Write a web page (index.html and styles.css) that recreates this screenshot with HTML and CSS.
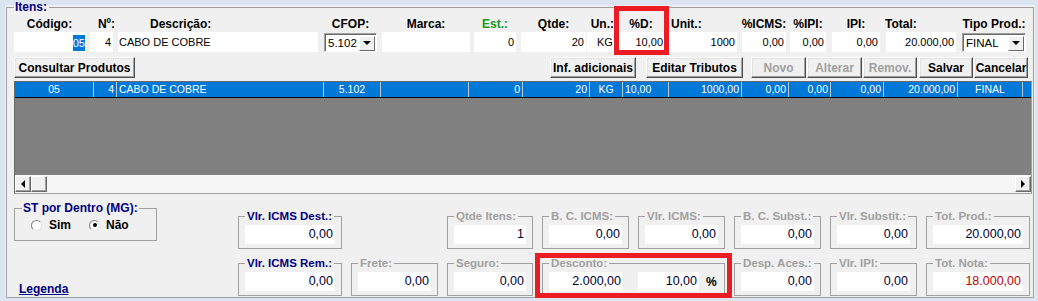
FILE: index.html
```html
<!DOCTYPE html>
<html lang="pt-BR">
<head>
    <meta charset="UTF-8">
    <title>Itens</title>
    <link rel="stylesheet" href="styles.css">
</head>
<body>
<div class="frame">
    <fieldset class="itens">
        <legend>Itens:</legend>

        <div class="fields">
            <div class="fld f-cod"><label>Código:</label><div class="box r sel-box"><span class="sel">05</span></div></div>
            <div class="fld f-num"><label class="lbl-right shift">Nº:</label><div class="box r">4</div></div>
            <div class="fld f-desc"><label class="lbl-left desc-lbl">Descrição:</label><div class="box">CABO DE COBRE</div></div>
            <div class="fld f-cfop"><label>CFOP:</label><div class="combo"><span class="txt">5.102</span><span class="drop"><i></i></span></div></div>
            <div class="fld f-marca"><label>Marca:</label><div class="box"></div></div>
            <div class="fld f-est"><label class="green">Est.:</label><div class="box r">0</div></div>
            <div class="fld f-qtde"><label>Qtde:</label><div class="box r">20</div></div>
            <div class="fld f-un"><label class="lbl-right">Un.:</label><div class="box un">KG</div></div>
            <div class="fld f-pd"><label>%D:</label><div class="box r">10,00</div></div>
            <div class="fld f-unit"><label class="lbl-left unit-lbl">Unit.:</label><div class="box r">1000</div></div>
            <div class="fld f-icms"><label>%ICMS:</label><div class="box r">0,00</div></div>
            <div class="fld f-ipip"><label>%IPI:</label><div class="box r">0,00</div></div>
            <div class="fld f-ipi"><label>IPI:</label><div class="box r">0,00</div></div>
            <div class="fld f-total"><label class="lbl-left total-lbl">Total:</label><div class="box r">20.000,00</div></div>
            <div class="fld f-tipo"><label>Tipo Prod.:</label><div class="combo"><span class="txt">FINAL</span><span class="drop"><i></i></span></div></div>
        </div>

        <div class="actions">
            <button class="btn b-cons">Consultar Produtos</button>
            <button class="btn b-inf">Inf. adicionais</button>
            <button class="btn b-edit">Editar Tributos</button>
            <button class="btn b-novo" disabled>Novo</button>
            <button class="btn b-alt" disabled>Alterar</button>
            <button class="btn b-rem" disabled>Remov.</button>
            <button class="btn b-salv">Salvar</button>
            <button class="btn b-canc">Cancelar</button>
        </div>

        <div class="list">
            <div class="row">
                <span class="c">05</span>
                <span class="r">4</span>
                <span class="l">CABO DE COBRE</span>
                <span class="c">5.102</span>
                <span></span>
                <span class="r">0</span>
                <span class="r">20</span>
                <span class="c">KG</span>
                <span class="l">10,00</span>
                <span class="r">1000,00</span>
                <span class="r">0,00</span>
                <span class="r">0,00</span>
                <span class="r">0,00</span>
                <span class="r">20.000,00</span>
                <span class="c">FINAL</span>
                <span class="fill"></span>
            </div>
            <div class="empty"></div>
            <div class="hscroll">
                <span class="sb-btn"><i class="arr-l"></i></span>
                <span class="sb-btn thumb"></span>
                <span class="track"></span>
                <span class="sb-btn"><i class="arr-r"></i></span>
            </div>
        </div>

        <div class="bottom">
            <div class="side">
                <fieldset class="st">
                    <legend>ST por Dentro (MG):</legend>
                    <div class="opts">
                        <span class="opt"><span class="radio"></span>Sim</span>
                        <span class="opt"><span class="radio on"></span>Não</span>
                    </div>
                </fieldset>
                <a href="#" class="legenda">Legenda</a>
            </div>

            <div class="totals">
                <fieldset class="grp"><legend class="nv">Vlr. ICMS Dest.:</legend><div class="val">0,00</div></fieldset>
                <fieldset class="grp g-qtde"><legend>Qtde Itens:</legend><div class="val">1</div></fieldset>
                <fieldset class="grp"><legend>B. C. ICMS:</legend><div class="val">0,00</div></fieldset>
                <fieldset class="grp"><legend>Vlr. ICMS:</legend><div class="val">0,00</div></fieldset>
                <fieldset class="grp"><legend>B. C. Subst.:</legend><div class="val">0,00</div></fieldset>
                <fieldset class="grp"><legend>Vlr. Substit.:</legend><div class="val">0,00</div></fieldset>
                <fieldset class="grp"><legend>Tot. Prod.:</legend><div class="val">20.000,00</div></fieldset>

                <fieldset class="grp"><legend class="nv">Vlr. ICMS Rem.:</legend><div class="val">0,00</div></fieldset>
                <fieldset class="grp"><legend>Frete:</legend><div class="val">0,00</div></fieldset>
                <fieldset class="grp"><legend>Seguro:</legend><div class="val">0,00</div></fieldset>
                <fieldset class="grp g-desc">
                    <legend>Desconto:</legend>
                    <div class="desc-row">
                        <div class="val v-abs">2.000,00</div>
                        <div class="val v-pct">10,00</div>
                        <span class="pct">%</span>
                    </div>
                </fieldset>
                <fieldset class="grp"><legend>Desp. Aces.:</legend><div class="val">0,00</div></fieldset>
                <fieldset class="grp"><legend>Vlr. IPI:</legend><div class="val">0,00</div></fieldset>
                <fieldset class="grp"><legend>Tot. Nota:</legend><div class="val red">18.000,00</div></fieldset>
            </div>
        </div>
    </fieldset>

    <div class="mark mark-pd"></div>
    <div class="mark mark-desc"></div>
</div>
</body>
</html>
```

FILE: styles.css
```css
* {
    padding: 0;
    margin: 0;
    box-sizing: border-box;
}
body {
    font-family: "Liberation Sans", Arial, sans-serif;
    background-color: #dce4f1;
    width: 1038px;
    height: 301px;
    overflow: hidden;
}
.frame {
    position: relative;
    width: 1038px;
    height: 301px;
    background: linear-gradient(#dce4f1 5px, #f0f0f0 5px);
    border-style: solid;
    border-color: #dce4f1;
    border-width: 0 3px 3px 5px;
    overflow: hidden;
}
.itens {
    margin: 0 1px;
    border: 1px solid #a0a0a0;
    padding: 0 1px 1px 7px;
    min-width: 0;
}
.itens > legend {
    font-size: 12px;
    font-weight: bold;
    color: #000080;
    line-height: 14px;
    padding: 0 2px 0 1px;
}

/* linha de campos */
.fields {
    display: flex;
    margin-top: 3px;
}
.fld {
    display: flex;
    flex-direction: column;
    flex: none;
}
.fld label {
    display: flex;
    justify-content: center;
    height: 15px;
    line-height: 15px;
    font-size: 12px;
    font-weight: bold;
    color: #000;
    white-space: nowrap;
}
.fld label.lbl-left {
    justify-content: flex-start;
}
.fld label.lbl-right {
    justify-content: flex-end;
}
.fld label.shift {
    margin-right: -2px;
}
.desc-lbl {
    padding-left: 32px;
}
.unit-lbl {
    padding-left: 3px;
}
.total-lbl {
    margin-left: -1px;
}
.green {
    color: #1a9a1a !important;
}
.box {
    height: 20px;
    background-color: #fff;
    font-size: 11px;
    line-height: 20px;
    padding: 0 2px 0 1px;
    white-space: nowrap;
    overflow: hidden;
}
.box.r {
    text-align: right;
}
.box.un {
    padding-left: 10px;
}
.sel-box {
    padding-right: 0;
}
.sel {
    display: inline-block;
    background-color: #0078d7;
    color: #fff;
    line-height: 16px;
    vertical-align: middle;
}
.f-cod { width: 71px; }
.f-num { width: 23px; margin-left: 5px; }
.f-desc { width: 200px; margin-left: 5px; }
.f-cfop { width: 53px; margin-left: 6px; }
.f-marca { width: 88px; margin-left: 5px; }
.f-est { width: 42px; margin-left: 4px; }
.f-qtde { width: 65px; margin-left: 5px; }
.f-un { width: 27px; margin-left: 1px; }
.f-pd { width: 48px; margin-left: 3px; }
.f-unit { width: 69px; margin-left: 3px; }
.f-icms { width: 44px; margin-left: 5px; }
.f-ipip { width: 36px; margin-left: 4px; }
.f-ipi { width: 48px; margin-left: 6px; }
.f-total { width: 70px; margin-left: 6px; }
.f-tipo { width: 64px; margin-left: 6px; }

.combo {
    display: flex;
    align-items: center;
    height: 19px;
    margin-top: 1px;
    background-color: #fff;
    border: 1px solid;
    border-color: #a0a0a0 #fff #fff #a0a0a0;
    box-shadow: inset 1px 1px 0 #696969;
    font-size: 11.5px;
}
.combo .txt {
    flex: 1;
    padding-left: 3px;
    padding-top: 1px;
    white-space: nowrap;
}
.drop {
    display: flex;
    align-items: center;
    justify-content: center;
    width: 16px;
    height: 15px;
    margin: 1px 1px 0 0;
    background-color: #f0f0f0;
    border: 1px solid;
    border-color: #fff #696969 #696969 #fff;
}
.drop i {
    border-left: 4px solid transparent;
    border-right: 4px solid transparent;
    border-top: 4px solid #000;
}

/* botões */
.actions {
    display: flex;
    margin-top: 5px;
    height: 21px;
}
.btn {
    height: 21px;
    font-family: "Liberation Sans", Arial, sans-serif;
    font-size: 12px;
    font-weight: bold;
    color: #000;
    background-color: #f0f0f0;
    border: 1px solid;
    border-color: #fff #505050 #505050 #fff;
    box-shadow: inset -1px -1px 0 #a0a0a0, inset 1px 1px 0 #e3e3e3;
    white-space: nowrap;
}
.btn:disabled {
    color: #a0a0a0;
}
.b-cons { width: 121px; }
.b-inf { width: 86px; margin-left: auto; }
.b-edit { width: 97px; margin-left: 10px; }
.b-novo { width: 55px; margin-left: 8px; }
.b-alt { width: 55px; margin-left: 1px; }
.b-rem { width: 54px; margin-left: 1px; }
.b-salv { width: 54px; margin-left: 2px; }
.b-canc { width: 54px; margin-left: 1px; margin-right: 4px; }

/* grade de itens */
.list {
    display: flex;
    flex-direction: column;
    height: 113px;
    margin-top: 3px;
    background-color: #808080;
    border: 1px solid;
    border-color: #696969 #a0a0a0 #a0a0a0 #696969;
}
.row {
    display: grid;
    grid-template-columns: 79px 23px 207px 57px 88px 54px 67px 33px 46px 73px 47px 42px 53px 74px 65px 1fr;
    height: 16px;
    background-color: #0078d7;
    border-bottom: 1px solid #000;
    color: #fff;
    font-size: 10.5px;
    line-height: 15px;
}
.row span {
    border-right: 1px solid #b9c9dc;
    white-space: nowrap;
    overflow: hidden;
}
.row .c { text-align: center; }
.row .r { text-align: right; padding-right: 2px; }
.row .l { text-align: left; padding-left: 2px; }
.row .fill { border-right: none; }
.empty {
    flex: 1;
}
.hscroll {
    display: flex;
    align-items: center;
    height: 18px;
    background-color: #f6f6f6;
}
.sb-btn {
    display: flex;
    align-items: center;
    justify-content: center;
    width: 16px;
    height: 16px;
    background-color: #f0f0f0;
    border: 1px solid;
    border-color: #fff #696969 #696969 #fff;
    box-shadow: inset -1px -1px 0 #a0a0a0;
}
.track {
    flex: 1;
}
.arr-l {
    border-top: 4px solid transparent;
    border-bottom: 4px solid transparent;
    border-right: 4px solid #000;
}
.arr-r {
    border-top: 4px solid transparent;
    border-bottom: 4px solid transparent;
    border-left: 4px solid #000;
}

/* rodapé */
.bottom {
    display: flex;
    height: 94px;
    margin-top: 8px;
}
.side {
    display: flex;
    flex-direction: column;
    width: 224px;
    flex: none;
}
.st {
    width: 143px;
    height: 39px;
    border: 1px solid #a0a0a0;
    padding: 0 0 0 7px;
}
.st legend {
    font-size: 12px;
    font-weight: bold;
    color: #000080;
    line-height: 12px;
    padding: 0 1px;
}
.opts {
    display: flex;
    margin: 4px 0 0 9px;
    font-size: 12px;
    font-weight: bold;
    line-height: 14px;
}
.opt {
    display: flex;
    align-items: center;
    gap: 7px;
}
.opt + .opt {
    margin-left: 18px;
    gap: 6px;
}
.radio {
    display: flex;
    align-items: center;
    justify-content: center;
    width: 11px;
    height: 11px;
    border-radius: 50%;
    background-color: #fff;
    border: 1px solid;
    border-color: #808080 #e3e3e3 #e3e3e3 #808080;
}
.radio.on::after {
    content: "";
    width: 4px;
    height: 4px;
    border-radius: 50%;
    background-color: #000;
}
.legenda {
    margin-top: auto;
    margin-left: 5px;
    font-size: 12px;
    font-weight: bold;
    color: #000080;
    line-height: 14px;
    text-decoration: underline;
    align-self: flex-start;
}

.totals {
    display: grid;
    grid-template-columns: 104px 87px 86px 87px 87px 87px 87px 104px;
    grid-template-rows: 39px 39px;
    column-gap: 9px;
    row-gap: 8px;
    margin-top: 8px;
}
.grp {
    border: 1px solid #a0a0a0;
    padding: 0 6px 4px 6px;
    min-width: 0;
}
.grp legend {
    font-size: 11.5px;
    font-weight: bold;
    line-height: 12px;
    padding: 0 2px;
    color: #a0a0a0;
    white-space: nowrap;
}
.grp legend.nv {
    color: #000080;
}
.g-qtde {
    grid-column: 3;
}
.g-desc {
    grid-column: span 2;
}
.val {
    height: 19px;
    margin-top: 3px;
    background-color: #fff;
    text-align: right;
    padding-right: 2px;
    font-size: 12.5px;
    line-height: 19px;
    color: #000033;
}
.val.red {
    color: #c00000;
}
.desc-row {
    display: flex;
    align-items: center;
    margin-top: 3px;
}
.desc-row .val {
    margin-top: 0;
}
.v-abs { width: 74px; }
.v-pct { width: 61px; margin-left: 15px; }
.pct {
    margin-left: 7px;
    font-size: 12px;
    font-weight: bold;
}

/* marcações vermelhas */
.mark {
    position: absolute;
    border: 5px solid #ec1c24;
}
.mark-pd {
    left: 609px;
    top: 6px;
    width: 55px;
    height: 49px;
}
.mark-desc {
    left: 530px;
    top: 253px;
    width: 197px;
    height: 45px;
}
```
